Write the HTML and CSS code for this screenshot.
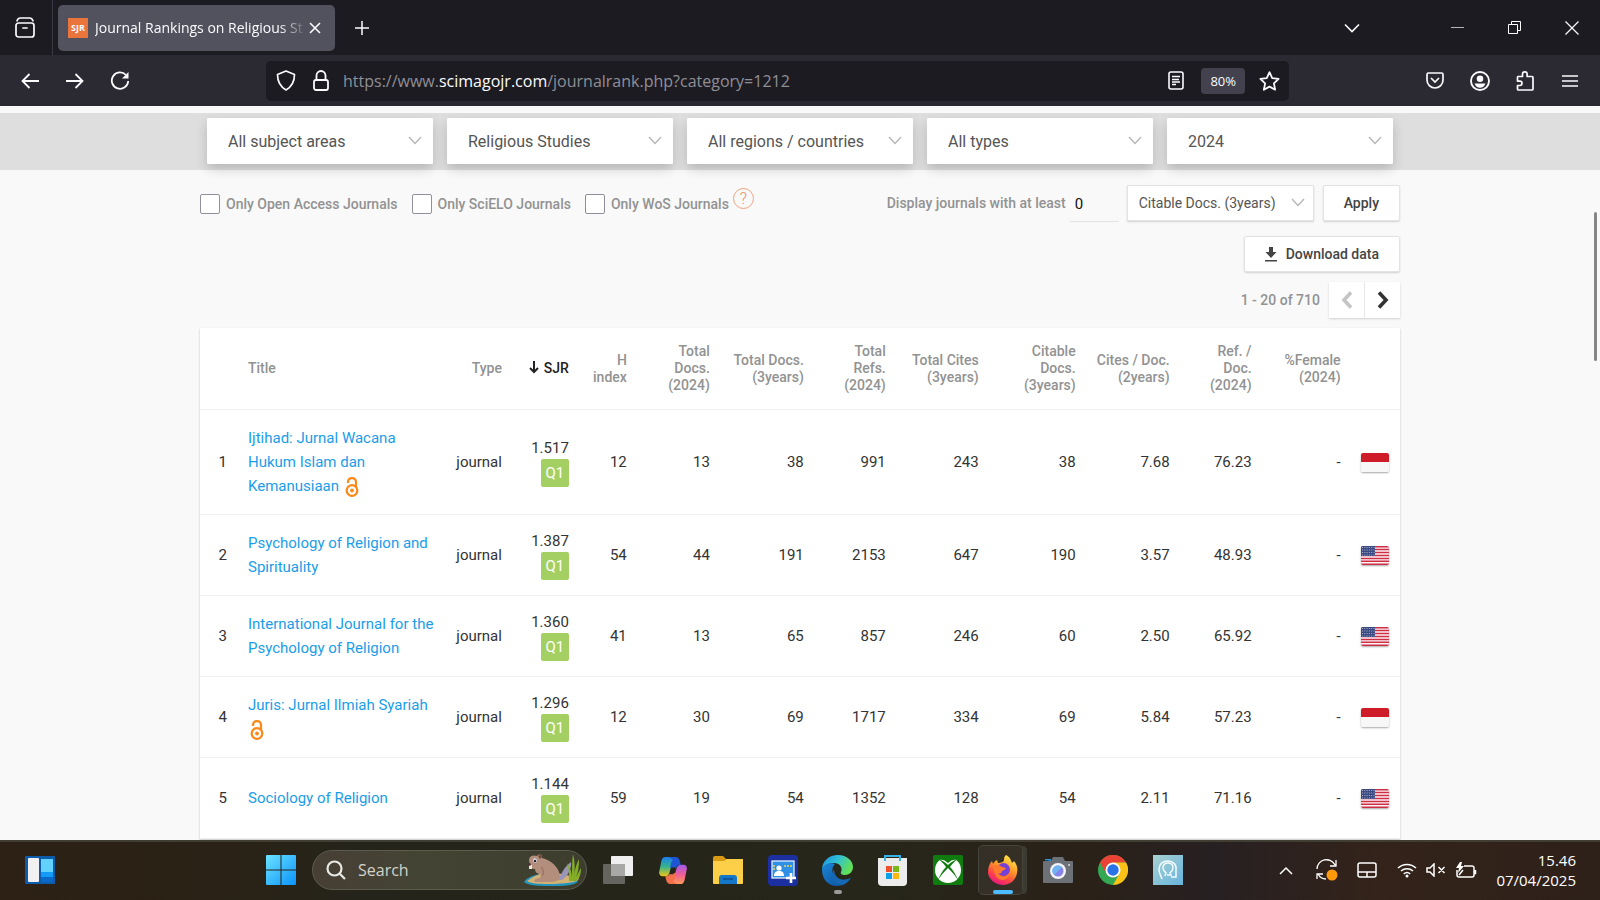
FILE: index.html
```html
<!DOCTYPE html>
<html lang="en">
<head>
    <meta charset="UTF-8">
    <meta name="viewport" content="width=device-width, initial-scale=1.0">
    <title>Journal Rankings on Religious Studies</title>
    <link rel="stylesheet" href="styles.css">
</head>
<body>
    <!-- Shared symbols -->
    <svg class="symbols" aria-hidden="true">
        <symbol id="chevron" viewBox="0 0 14 9"><path d="M1 1l6 6.500 6-6.500" fill="none" stroke="currentColor" stroke-width="1.300"/></symbol>
        <symbol id="open-access" viewBox="0 0 14 20">
            <g fill="none" stroke="#f98a1c" stroke-width="2.300"><circle cx="7" cy="13.500" r="5.300"/><path d="M3 6V5a4 4 0 0 1 8 0v5.500"/></g>
            <circle cx="7" cy="13.500" r="1.900" fill="#f98a1c"/>
        </symbol>
        <symbol id="flag-id" viewBox="0 0 28 19"><rect width="28" height="19" fill="#f7f7f7"/><rect width="28" height="9" fill="#ce1c28"/></symbol>
        <symbol id="flag-us" viewBox="0 0 28 19">
            <rect width="28" height="19" fill="#fbf3f4"/>
            <path d="M0 .700h28M0 3.600h28M0 6.500h28M0 9.500h28M0 12.400h28M0 15.300h28M0 18.300h28" stroke="#cf2f44" stroke-width="1.500"/>
            <rect width="14" height="10" fill="#3b4a80"/>
            <path d="M1 1.500h13M1 4h13M1 6.500h13M1 9h13" stroke="#a8b0cc" stroke-width="1" stroke-dasharray="1 1.300"/>
        </symbol>
    </svg>

    <header class="browser">
        <div class="tab-bar">
            <button class="tab-view" aria-label="Recent browsing">
                <svg width="20" height="21" viewBox="0 0 20 21" fill="none" stroke="currentColor" stroke-width="1.700" stroke-linecap="round"><rect x="1" y="6" width="18" height="14" rx="2.500"/><path d="M2 3.800Q3 1 5.500 1h9Q17 1 18 3.800M8 11h4"/></svg>
            </button>
            <div class="tab">
                <span class="favicon">SJR</span>
                <span class="tab-title">Journal Rankings on Religious St</span>
                <button class="tab-close" aria-label="Close tab">
                    <svg width="12" height="12" viewBox="0 0 12 12" stroke="currentColor" stroke-width="1.600"><path d="M1 1l10 10M11 1L1 11"/></svg>
                </button>
            </div>
            <button class="tool" aria-label="New tab">
                <svg width="16" height="16" viewBox="0 0 16 16" stroke="currentColor" stroke-width="1.500"><path d="M8 1v14M1 8h14"/></svg>
            </button>
            <div class="window-controls">
                <button class="tool all-tabs" aria-label="List all tabs">
                    <svg width="16" height="10" viewBox="0 0 16 10" fill="none" stroke="currentColor" stroke-width="1.600"><path d="M1 1.500l7 7 7-7"/></svg>
                </button>
                <button class="window-button" aria-label="Minimize"><svg width="13" height="13" viewBox="0 0 13 13" stroke="#b5b5b8"><path d="M0 6.500h13" stroke-width="1"/></svg></button>
                <button class="window-button" aria-label="Restore"><svg width="13" height="13" viewBox="0 0 13 13" fill="none" stroke="currentColor" stroke-width="1"><path d="M.500 3.500h9v9h-9zM3.500 3V.500h9v9H10"/></svg></button>
                <button class="window-button" aria-label="Close"><svg width="14" height="14" viewBox="0 0 14 14" stroke="currentColor" stroke-width="1.200"><path d="M.500.500l13 13M13.500.500l-13 13"/></svg></button>
            </div>
        </div>

        <div class="nav-bar">
            <button class="tool" aria-label="Back"><svg width="18" height="16" viewBox="0 0 18 16" fill="none" stroke="currentColor" stroke-width="1.800"><path d="M8.500 1l-7 7 7 7M1.500 8H18"/></svg></button>
            <button class="tool" aria-label="Forward"><svg width="18" height="16" viewBox="0 0 18 16" fill="none" stroke="currentColor" stroke-width="1.800"><path d="M9.500 1l7 7-7 7M16.500 8H0"/></svg></button>
            <button class="tool" aria-label="Reload"><svg width="20" height="20" viewBox="0 0 20 20" fill="none" stroke="currentColor" stroke-width="1.800"><path d="M16 4A8.200 8.200 0 1 0 18.200 10"/><path d="M18.500 1v6.500H12z" fill="currentColor" stroke="none"/></svg></button>
            <div class="url-bar">
                <svg width="20" height="21" viewBox="0 0 20 21" fill="none" stroke="currentColor" stroke-width="1.700" stroke-linejoin="round"><path d="M10 1l8.500 3.500c0 7-2.500 12-8.500 15.500C4 16.500 1.500 11.500 1.500 4.500z"/></svg>
                <svg width="16" height="21" viewBox="0 0 16 21" fill="none" stroke="currentColor" stroke-width="1.800"><rect x="1" y="10" width="14" height="10" rx="2"/><path d="M3.500 10V5.500a4.500 4.500 0 0 1 9 0V10"/></svg>
                <div class="url" role="textbox" aria-label="Address">https://www.<b>scimagojr.com</b>/journalrank.php?category=1212</div>
                <svg width="16" height="19" viewBox="0 0 16 19" fill="none" stroke="currentColor" stroke-width="1.600"><rect x="1" y="1" width="14" height="17" rx="2"/><path d="M4 5.500h8M4 8.500h7M4 11h8M4 13.500h4"/></svg>
                <button class="zoom-level">80%</button>
                <svg width="21" height="20" viewBox="0 0 21 20" fill="none" stroke="currentColor" stroke-width="1.800" stroke-linejoin="round"><path d="M10.500 1.200l2.700 5.900 6.400.800-4.700 4.400 1.200 6.400-5.600-3.100-5.600 3.100 1.200-6.400L1.400 7.900l6.400-.800z"/></svg>
            </div>
            <button class="tool" aria-label="Pocket"><svg width="18" height="17" viewBox="0 0 18 17" fill="none" stroke="currentColor" stroke-width="1.700"><path d="M2.500 1h13A1.500 1.500 0 0 1 17 2.500V8a8 8 0 0 1-16 0V2.500A1.500 1.500 0 0 1 2.500 1zM5 6l4 4 4-4"/></svg></button>
            <button class="tool" aria-label="Account"><svg width="20" height="20" viewBox="0 0 20 20"><circle cx="10" cy="10" r="9" fill="none" stroke="currentColor" stroke-width="1.900"/><circle cx="10" cy="7.800" r="3.300" fill="currentColor"/><path d="M4.500 12.500h11c-.8 2.800-3 4.200-5.500 4.200s-4.700-1.400-5.500-4.200z" fill="currentColor"/></svg></button>
            <button class="tool" aria-label="Extensions"><svg width="18" height="20" viewBox="0 0 18 20" fill="none" stroke="currentColor" stroke-width="1.700" stroke-linejoin="round"><path d="M2 5.500h4.500V3.200a2.300 2.300 0 0 1 4.600 0v2.300H16a1 1 0 0 1 1 1V18a1 1 0 0 1-1 1H2.500a1 1 0 0 1-1-1v-3.500h2.300a2.200 2.200 0 0 0 0-4.400H1.500V6z"/></svg></button>
            <button class="tool" aria-label="Menu"><svg width="16" height="14" viewBox="0 0 16 14" stroke="currentColor" stroke-width="1.600"><path d="M0 2h16M0 7h16M0 12h16"/></svg></button>
        </div>
    </header>

    <main class="page">
        <div class="filter-band">
            <div class="filters">
                <div class="dropdown"><select aria-label="Subject area"><option>All subject areas</option></select><svg><use href="#chevron"/></svg></div>
                <div class="dropdown"><select aria-label="Category"><option>Religious Studies</option></select><svg><use href="#chevron"/></svg></div>
                <div class="dropdown"><select aria-label="Region or country"><option>All regions / countries</option></select><svg><use href="#chevron"/></svg></div>
                <div class="dropdown"><select aria-label="Type"><option>All types</option></select><svg><use href="#chevron"/></svg></div>
                <div class="dropdown"><select aria-label="Year"><option>2024</option></select><svg><use href="#chevron"/></svg></div>
            </div>
        </div>

        <div class="content">
            <div class="options">
                <label class="check"><input type="checkbox">Only Open Access Journals</label>
                <label class="check"><input type="checkbox">Only SciELO Journals</label>
                <label class="check"><input type="checkbox">Only WoS Journals</label>
                <a href="#" class="help" aria-label="Help">?</a>
                <div class="minimum">
                    <label for="min-docs">Display journals with at least</label>
                    <input id="min-docs" type="text" value="0">
                    <div class="dropdown small"><select aria-label="Indicator"><option>Citable Docs. (3years)</option></select><svg><use href="#chevron"/></svg></div>
                    <button class="btn">Apply</button>
                </div>
            </div>

            <div class="actions">
                <button class="btn download">
                    <svg width="12" height="16" viewBox="0 0 12 16" fill="currentColor"><path d="M4 1h4v5h3.500L6 12 .500 6H4zM0 14h12v1.500H0z"/></svg>
                    Download data
                </button>
            </div>

            <div class="pagination">
                <span>1 - 20 of 710</span>
                <div class="pager">
                    <button disabled aria-label="Previous page"><svg width="12" height="18" viewBox="0 0 12 18" fill="none" stroke="currentColor" stroke-width="3.600"><path d="M10 1.500L3 9l7 7.500"/></svg></button>
                    <button aria-label="Next page"><svg width="12" height="18" viewBox="0 0 12 18" fill="none" stroke="currentColor" stroke-width="3.600"><path d="M2 1.500L9 9l-7 7.500"/></svg></button>
                </div>
            </div>

            <table class="rankings">
                <colgroup>
                    <col class="c-rank"><col class="c-title"><col class="c-type"><col class="c-sjr"><col class="c-h"><col class="c-docs"><col class="c-docs3">
                    <col class="c-refs"><col class="c-cites"><col class="c-citable"><col class="c-cpd"><col class="c-rpd"><col class="c-female"><col class="c-flag">
                </colgroup>
                <thead>
                    <tr>
                        <th></th>
                        <th class="title">Title</th>
                        <th>Type</th>
                        <th class="sorted"><svg width="10" height="13" viewBox="0 0 10 13" fill="none" stroke="currentColor" stroke-width="2"><path d="M5 0v11M1 7l4 4 4-4"/></svg>SJR</th>
                        <th>H<br>index</th>
                        <th>Total<br>Docs.<br>(2024)</th>
                        <th>Total Docs.<br>(3years)</th>
                        <th>Total<br>Refs.<br>(2024)</th>
                        <th>Total Cites<br>(3years)</th>
                        <th>Citable<br>Docs.<br>(3years)</th>
                        <th>Cites / Doc.<br>(2years)</th>
                        <th>Ref. /<br>Doc.<br>(2024)</th>
                        <th>%Female<br>(2024)</th>
                        <th></th>
                    </tr>
                </thead>
                <tbody>
                    <tr>
                        <td>1</td>
                        <td class="title"><a href="#">Ijtihad: Jurnal Wacana Hukum Islam dan Kemanusiaan</a> <svg class="oa"><use href="#open-access"/></svg></td>
                        <td>journal</td>
                        <td class="sjr">1.517<span class="q1">Q1</span></td>
                        <td>12</td><td>13</td><td>38</td><td>991</td><td>243</td><td>38</td><td>7.68</td><td>76.23</td><td>-</td>
                        <td class="country"><svg class="flag"><use href="#flag-id"/></svg></td>
                    </tr>
                    <tr>
                        <td>2</td>
                        <td class="title"><a href="#">Psychology of Religion and Spirituality</a></td>
                        <td>journal</td>
                        <td class="sjr">1.387<span class="q1">Q1</span></td>
                        <td>54</td><td>44</td><td>191</td><td>2153</td><td>647</td><td>190</td><td>3.57</td><td>48.93</td><td>-</td>
                        <td class="country"><svg class="flag"><use href="#flag-us"/></svg></td>
                    </tr>
                    <tr>
                        <td>3</td>
                        <td class="title"><a href="#">International Journal for the Psychology of Religion</a></td>
                        <td>journal</td>
                        <td class="sjr">1.360<span class="q1">Q1</span></td>
                        <td>41</td><td>13</td><td>65</td><td>857</td><td>246</td><td>60</td><td>2.50</td><td>65.92</td><td>-</td>
                        <td class="country"><svg class="flag"><use href="#flag-us"/></svg></td>
                    </tr>
                    <tr>
                        <td>4</td>
                        <td class="title"><a href="#">Juris: Jurnal Ilmiah Syariah</a> <svg class="oa"><use href="#open-access"/></svg></td>
                        <td>journal</td>
                        <td class="sjr">1.296<span class="q1">Q1</span></td>
                        <td>12</td><td>30</td><td>69</td><td>1717</td><td>334</td><td>69</td><td>5.84</td><td>57.23</td><td>-</td>
                        <td class="country"><svg class="flag"><use href="#flag-id"/></svg></td>
                    </tr>
                    <tr>
                        <td>5</td>
                        <td class="title"><a href="#">Sociology of Religion</a></td>
                        <td>journal</td>
                        <td class="sjr">1.144<span class="q1">Q1</span></td>
                        <td>59</td><td>19</td><td>54</td><td>1352</td><td>128</td><td>54</td><td>2.11</td><td>71.16</td><td>-</td>
                        <td class="country"><svg class="flag"><use href="#flag-us"/></svg></td>
                    </tr>
                </tbody>
            </table>
        </div>
        <div class="scroll-thumb"></div>
    </main>

    <footer class="taskbar">
        <button class="app widgets" aria-label="Widgets">
            <svg width="30" height="30" viewBox="0 0 30 28"><rect width="30" height="28" rx="1" fill="#0d5cab"/><rect x="3" y="2" width="11" height="24" rx="1" fill="#f1f1f1"/><rect x="16" y="3" width="12" height="13" fill="#62d1fb"/><rect x="16" y="16" width="12" height="5" fill="#139bf5"/><rect x="16" y="21" width="12" height="5" fill="#0a68c8"/></svg>
        </button>
        <button class="app" aria-label="Start">
            <svg width="30" height="30" viewBox="0 0 30 30"><defs><linearGradient id="win" x1="0" y1="0" x2="1" y2="1"><stop offset="0" stop-color="#6be3ff"/><stop offset="1" stop-color="#0b93fb"/></linearGradient></defs><path d="M1 0h13.500v14.500H0V1a1 1 0 0 1 1-1zM15.500 0H29a1 1 0 0 1 1 1v13.500H15.500zM0 15.500h14.500V30H1a1 1 0 0 1-1-1zM15.500 15.500H30V29a1 1 0 0 1-1 1H15.500z" fill="url(#win)"/></svg>
        </button>
        <div class="search">
            <svg width="20" height="20" viewBox="0 0 20 20" fill="none" stroke="#e8e8e4" stroke-width="2.200"><circle cx="8.500" cy="8.500" r="7"/><path d="M13.500 13.500l5.500 5.500"/></svg>
            <input type="search" aria-label="Search" placeholder="Search">
            <svg width="60" height="34" viewBox="0 0 60 34">
                <path d="M1 29c4-6 14-9 28-8l26 6c0 4-8 6-24 6-14 0-26 0-30-4z" fill="#2495bd"/>
                <path d="M4 28C12 21 24 18 34 20l22 5c0 4-10 5-24 6-14 0-24 0-28-3z" fill="#d3b274"/>
                <path d="M35 27c3-6 7-14 13-18 1 6-3 14-9 18z" fill="#9a95b8"/>
                <path d="M7 11C4 4 9 1 14 3c2-3 6-1 5 2 9 2 17 9 18 18 0 6-7 6-13 6H13c-3 0-2-4 4-4l1-4c-4 0-6-2-6-5-3 0-6-1-5-5z" fill="#b48e7c"/>
                <path d="M18 14c3 3 3 6 1 9" fill="none" stroke="#8e6a5b" stroke-width="1"/>
                <path d="M15 3c1-2 4-1 4 1l-2 2z" fill="#6d4639"/>
                <ellipse cx="12" cy="7.500" rx="1.800" ry="2.200" fill="#dce4f5"/><circle cx="12" cy="8" r="1.200" fill="#24212f"/><path d="M6 12h3v4H6z" fill="#efe6df"/><ellipse cx="6.500" cy="11.500" rx="1.500" ry="1.300" fill="#52323a"/>
                <path d="M46 28c0-8 0-12-2-18 4 6 5 10 5 15 0-10 0-18 1-24 2 8 2 15 1 23 1-8 2-12 5-18 0 8-1 14-3 18 2-3 3-6 5-9 0 7-2 11-5 13z" fill="#83ae25"/>
            </svg>
        </div>
        <button class="app" aria-label="Task view">
            <svg width="30" height="28" viewBox="0 0 30 28"><rect x="8" width="22" height="20" rx="1" fill="#efefef"/><rect y="8" width="22" height="20" rx="1" fill="#66645f"/><rect x="8" y="8" width="14" height="12" fill="#a8a8a6"/></svg>
        </button>
        <button class="app" aria-label="Copilot">
            <svg width="28" height="27" viewBox="0 0 28 28">
                <defs>
                    <linearGradient id="cp1" x1="0" y1="0" x2="0" y2="1"><stop offset="0" stop-color="#1c7ff2"/><stop offset=".5" stop-color="#35b58c"/><stop offset="1" stop-color="#f2c417"/></linearGradient>
                    <linearGradient id="cp2" x1="0" y1="0" x2="0" y2="1"><stop offset="0" stop-color="#a25af0"/><stop offset=".5" stop-color="#ee5d97"/><stop offset="1" stop-color="#ff9a54"/></linearGradient>
                </defs>
                <path d="M6 0h11l-3 4-4 13c-1 2-2 3-4 3H3c-3 0-4-3-3-6L2 4c1-3 2-4 4-4z" fill="url(#cp1)"/>
                <path d="M22 28H11l3-4 4-13c1-2 2-3 4-3h3c3 0 4 3 3 6l-2 10c-1 3-2 4-4 4z" fill="url(#cp2)"/>
                <path d="M8 0h9c3 0 4 3 5 8-3 0-4 1-5 4h-3l-3-1c1-4 1-7 3-7-1-2-3-4-6-4z" fill="#1c56d4"/>
                <path d="M20 28h-9c-3 0-4-3-5-8 3 0 4-1 5-4h3l3 1c-1 4-1 7-3 7 1 2 3 4 6 4z" fill="#f2704a"/>
                <path d="M12.500 11h4l-2 7h-4z" fill="#27261a"/>
            </svg>
        </button>
        <button class="app" aria-label="File Explorer">
            <svg width="30" height="30" viewBox="0 0 30 28"><path d="M0 2a2 2 0 0 1 2-2h8l3 3h17v6H0z" fill="#d99a13"/><path d="M0 5h11l3-2h16v24a1 1 0 0 1-1 1H1a1 1 0 0 1-1-1z" fill="#fdcf48"/><path d="M6 28v-6a3 3 0 0 1 3-3h12a3 3 0 0 1 3 3v6z" fill="#1477c9"/><path d="M10 23h10" stroke="#0a4c8c" stroke-width="1.500"/></svg>
        </button>
        <button class="app" aria-label="Learning app">
            <svg width="30" height="31" viewBox="0 0 30 31"><rect width="30" height="31" rx="4" fill="#1b2fa0"/><rect x="4" y="6" width="22" height="17" fill="#2f8fe4" stroke="#dff0ff" stroke-width="1.300"/><circle cx="11" cy="13" r="2.600" fill="#fff"/><path d="M6 21c0-4 2-5 5-5s5 1 5 5z" fill="#fff"/><path d="M16 11h8M6 10v6" stroke="#e9dc5b" stroke-width="1.500" stroke-dasharray="2 1"/><path d="M23 18v10M18 23h10" stroke="#fff" stroke-width="2.600"/></svg>
        </button>
        <button class="app running" aria-label="Edge">
            <svg width="31" height="31" viewBox="0 0 31 31">
                <defs>
                    <linearGradient id="ed1" x1="0" y1="0" x2="1" y2=".4"><stop offset="0" stop-color="#1a8fe0"/><stop offset=".5" stop-color="#2fbfd8"/><stop offset="1" stop-color="#62df58"/></linearGradient>
                    <linearGradient id="ed2" x1="0" y1="0" x2="1" y2="1"><stop offset="0" stop-color="#1b86d8"/><stop offset="1" stop-color="#0c4b94"/></linearGradient>
                </defs>
                <path d="M0 15C0 6 7 0 16 0c9 0 15 6 15 12 0 5-4 8-8 8-3 0-5-1-4-3 2-4-1-9-7-9-6 0-11 3-12 7z" fill="url(#ed1)"/>
                <path d="M0 15C1 9 8 7 13 9c-3 3-3 7-2 10 2 6 9 8 17 4-3 6-8 8-13 8C6 31 0 24 0 15z" fill="url(#ed2)"/>
                <path d="M12 14c-4 7 0 15 8 16 4-1 7-4 9-7-8 4-17 1-17-9z" fill="#1667b4"/>
            </svg>
        </button>
        <button class="app" aria-label="Microsoft Store">
            <svg width="29" height="32" viewBox="0 0 29 32"><path d="M7 7V2h15v5" fill="none" stroke="#35b2ea" stroke-width="2"/><path d="M0 4h29v24a4 4 0 0 1-4 4H4a4 4 0 0 1-4-4z" fill="#ececec"/><path d="M7 7V1M22 7V1" stroke="#35b2ea" stroke-width="2"/><path d="M8 12h6v6H8z" fill="#f0502a"/><path d="M15 12h6v6h-6z" fill="#7cb813"/><path d="M8 19h6v6H8z" fill="#10a0e8"/><path d="M15 19h6v6h-6z" fill="#fab90f"/></svg>
        </button>
        <button class="app" aria-label="Xbox">
            <svg width="30" height="30" viewBox="0 0 30 30"><rect width="30" height="30" rx="2" fill="#107c10"/><circle cx="15" cy="15" r="13" fill="#fff"/><path d="M6 5c3-1 6 0 9 3 3-3 6-4 9-3l-2-3H8z" fill="#107c10"/><path d="M6 5c3 0 6 2 9 5 3-3 6-5 9-5-2 1-5 4-7 7 3 3 6 8 8 13-3-5-7-9-10-12-3 3-7 7-10 12 2-5 5-10 8-13C11 9 8 6 6 5z" fill="#107c10"/></svg>
        </button>
        <button class="app active" aria-label="Firefox">
            <svg width="30" height="30" viewBox="0 0 30 30">
                <defs><linearGradient id="ff" x1=".8" y1="0" x2=".3" y2="1"><stop offset="0" stop-color="#fff04a"/><stop offset=".45" stop-color="#ff9328"/><stop offset=".75" stop-color="#ff3f4c"/><stop offset="1" stop-color="#e31587"/></linearGradient></defs>
                <path d="M18 0c4 2 5 5 6 8l2-2c3 4 4 7 3 12-1 7-7 12-14 12S1 25 0 18C0 13 1 9 4 6l1 3c1-2 2-3 4-4l1 3c3 0 6-1 6-3 0-2 0-3 2-5z" fill="url(#ff)"/>
                <circle cx="15.500" cy="14.500" r="6.500" fill="#7440d8"/>
                <path d="M6 11c3-2 6-1 8 1l4 1c-1 2-3 2-4 3 0 2-2 3-4 2 2 4 8 5 12 0-1 6-5 7-8 7-6-1-9-7-8-14z" fill="#ff7a2a"/>
            </svg>
        </button>
        <button class="app" aria-label="Camera">
            <svg width="30" height="28" viewBox="0 0 30 26"><path d="M2 3V2h6v2z" fill="#2296e3"/><path d="M0 5a1 1 0 0 1 1-1h7l2-4h10l2 4h7a1 1 0 0 1 1 1v20a1 1 0 0 1-1 1H1a1 1 0 0 1-1-1z" fill="#6c7178"/><circle cx="15" cy="14" r="8" fill="#f4f4f6"/><circle cx="15" cy="14" r="5.500" fill="#8684ea"/><path d="M11 18a5.500 5.500 0 0 1 8-8z" fill="#6eb5f2"/><circle cx="26" cy="8" r="1" fill="#d8dadf"/></svg>
        </button>
        <button class="app" aria-label="Chrome">
            <svg width="30" height="30" viewBox="0 0 30 30"><circle cx="15" cy="15" r="15" fill="#34a853"/><path d="M2 7.500A15 15 0 0 1 28 7.500L15 8l-6.500 11z" fill="#ea4335"/><path d="M28 7.500A15 15 0 0 1 15 30l6.500-11.500L15 7.500z" fill="#fbc116"/><circle cx="15" cy="15" r="7.500" fill="#fff"/><circle cx="15" cy="15" r="5.700" fill="#2a72e8"/></svg>
        </button>
        <button class="app" aria-label="Assistant">
            <svg width="30" height="30" viewBox="0 0 30 30"><defs><linearGradient id="as" x1="0" y1="0" x2="1" y2="1"><stop offset="0" stop-color="#a8d2d2"/><stop offset="1" stop-color="#68b4dd"/></linearGradient></defs><rect width="30" height="30" fill="url(#as)"/><g fill="none" stroke="#f4fbff" stroke-width="1.500"><path d="M9 24l-2-5c-1-2-1-3-1-5 0-5 4-8 9-8s9 4 8 9v7h-5"/><path d="M12 21l1-3c-2-2-3-3-3-5 0-3 2-5 5-5s5 2 5 5c0 2-1 3-3 5l1 2h-4"/></g></svg>
        </button>
        <div class="tray">
            <svg class="up" width="14" height="9" viewBox="0 0 14 9"><path d="M1 8l6-6 6 6"/></svg>
            <svg class="sync" width="22" height="22" viewBox="0 0 22 22"><path d="M1 10A9.500 9.500 0 0 1 19 6M20 1v6h-6M1 20v-5h6M2 15a9.500 9.500 0 0 0 8 5" stroke-width="1.300"/><circle cx="16" cy="16" r="5.500" fill="#ff9a0a" stroke="none"/></svg>
            <svg class="touchpad" width="20" height="16" viewBox="0 0 20 16"><rect x="1" y="1" width="18" height="14" rx="2"/><path d="M1 10h18M10 10v5"/></svg>
            <svg class="wifi" width="20" height="16" viewBox="0 0 20 16"><path d="M1 6a13 13 0 0 1 18 0M4 9a9 9 0 0 1 12 0M6.800 11.800a5 5 0 0 1 6.400 0"/><circle cx="10" cy="14" r="1.500" fill="#fff" stroke="none"/></svg>
            <svg class="volume" width="20" height="14" viewBox="0 0 20 14"><path d="M1 5h3l4-4v12L4 9H1zM12.500 4l6 6M18.500 4l-6 6"/></svg>
            <svg class="battery" width="21" height="17" viewBox="0 0 21 17"><path d="M8 4h8a2 2 0 0 1 2 2v7a2 2 0 0 1-2 2H3a2 2 0 0 1-2-2V8M18.500 8v3.500h1V8M3 13l4-5"/><path d="M4 0h2L5 4h3L2 11l1-5H0z" fill="#fff" stroke="none"/></svg>
            <div class="clock"><span>15.46</span><span>07/04/2025</span></div>
        </div>
    </footer>
</body>
</html>
```

FILE: styles.css
```css
:root {
    --link: #1a9dea;
    --text: #333333;
    --muted: #929292;
    --green: #a4cf63;
    --page-bg: #f9f9f9;
    --ui-font: "Open Sans", "Noto Sans", sans-serif;
}

* {
    box-sizing: border-box;
}

body {
    margin: 0;
    height: 100vh;
    display: flex;
    flex-direction: column;
    overflow: hidden;
    background: var(--page-bg);
    color: var(--text);
    font-family: Roboto, sans-serif;
    font-size: 15px;
}

button {
    border: 0;
    padding: 0;
    background: none;
    color: inherit;
    font: inherit;
    cursor: pointer;
}

.symbols {
    display: none;
}

/* Browser chrome */
.browser {
    flex: none;
    color: #fbfbfe;
    font-family: var(--ui-font);
}

.tab-bar {
    display: flex;
    align-items: center;
    height: 55px;
    background: #1c1b22;
}

.tab-view {
    display: flex;
    align-items: center;
    justify-content: center;
    width: 53px;
    height: 55px;
    border-right: 1px solid #3a3944;
    padding-right: 2px;
}

.tab {
    display: flex;
    align-items: center;
    width: 277px;
    height: 46px;
    margin-left: 5px;
    margin-right: 4px;
    padding: 0 12px 0 10px;
    border-radius: 5px;
    background: #52525e;
}

.favicon {
    width: 20px;
    height: 20px;
    margin-right: 7px;
    background: #e9743c;
    font-size: 9px;
    font-weight: 700;
    line-height: 20px;
    text-align: center;
}

.tab-title {
    flex: 1;
    font-size: 14px;
    white-space: nowrap;
    mask-image: linear-gradient(to right, #000 calc(100% - 28px), transparent);
}

.tab-close {
    display: flex;
    padding: 2px;
}

.tool {
    display: flex;
    align-items: center;
    justify-content: center;
    flex: none;
    width: 45px;
    height: 40px;
}

.window-controls {
    display: flex;
    align-items: center;
    margin-left: auto;
}

.all-tabs {
    margin-right: 55px;
}

.window-button {
    display: flex;
    align-items: center;
    justify-content: center;
    width: 57px;
    height: 40px;
}

.nav-bar {
    display: flex;
    align-items: center;
    height: 51px;
    padding: 0 8px 0 7px;
    background: #2b2a33;
}

.url-bar {
    display: flex;
    align-items: center;
    flex: 1;
    height: 40px;
    margin: 0 123px 0 124px;
    padding: 0 9px 0 10px;
    border-radius: 5px;
    background: #1c1b22;
}

.url {
    flex: 1;
    margin-left: 14px;
    color: #8f8f96;
    font-size: 16px;
    white-space: nowrap;
}

.url b {
    color: #fbfbfe;
    font-weight: 400;
}

.url-bar svg:nth-of-type(2) {
    margin-left: 17px;
}

.zoom-level {
    height: 26px;
    margin: 0 14px 0 17px;
    padding: 0 9px;
    border-radius: 4px;
    background: #42414d;
    font-size: 13px;
}

/* Page */
.page {
    position: relative;
    flex: 1;
    min-height: 0;
    overflow: hidden;
    padding-top: 7px;
}

.scroll-thumb {
    position: absolute;
    top: 106px;
    right: 3px;
    width: 3px;
    height: 149px;
    border-radius: 2px;
    background: #868686;
}

.filter-band {
    height: 57px;
    padding-top: 5px;
    background: #dedede;
}

.filters {
    display: grid;
    grid-template-columns: repeat(5, 1fr);
    gap: 14px;
    max-width: 1200px;
    margin: 0 auto;
    padding: 0 7px;
}

.dropdown {
    position: relative;
}

.dropdown select {
    width: 100%;
    height: 46px;
    padding: 0 36px 0 21px;
    border: 0;
    border-radius: 1px;
    background: #fff;
    box-shadow: 0 5px 12px rgba(0, 0, 0, 0.18);
    color: #555;
    font: 16px Roboto, sans-serif;
    appearance: none;
}

.dropdown svg {
    position: absolute;
    top: 50%;
    right: 11px;
    width: 14px;
    height: 9px;
    margin-top: -5px;
    color: #b5b5b5;
    pointer-events: none;
}

.content {
    max-width: 1200px;
    margin: 0 auto;
    padding-top: 15px;
}

.options {
    display: flex;
    align-items: center;
    height: 36px;
    color: var(--muted);
    font-size: 14px;
    font-weight: 500;
}

.check {
    display: flex;
    align-items: center;
    gap: 6px;
    margin-right: 14px;
    padding-top: 1px;
}

.check input {
    width: 20px;
    height: 20px;
    margin: 0;
    border: 1px solid #8f8f9d;
    border-radius: 2px;
    background: #fff;
    appearance: none;
}

.help {
    width: 21px;
    height: 21px;
    margin: 0 0 10px -10px;
    border: 1px solid #f2a27e;
    border-radius: 50%;
    color: #f08a5d;
    font-size: 16px;
    font-weight: 300;
    line-height: 19px;
    text-align: center;
    text-decoration: none;
}

.minimum {
    display: flex;
    align-items: center;
    margin-left: auto;
}

.minimum > input {
    width: 49px;
    height: 36px;
    margin: 2px 8px 0 4px;
    padding: 0 5px;
    border: 0;
    border-bottom: 1px solid #e3e3e3;
    background: none;
    color: #111;
    font: 15px Roboto, sans-serif;
}

.dropdown.small select {
    width: 187px;
    height: 36px;
    padding: 0 30px 0 11px;
    border: 1px solid #e3e3e3;
    box-shadow: 0 1px 2px rgba(0, 0, 0, 0.16);
    font-size: 14px;
}

.dropdown.small svg {
    right: 9px;
}

.btn {
    height: 36px;
    padding: 0 20px;
    border: 1px solid #e3e3e3;
    border-radius: 2px;
    background: #fff;
    box-shadow: 0 1px 2px rgba(0, 0, 0, 0.16);
    color: #444;
    font-size: 14px;
    font-weight: 500;
}

.minimum .btn {
    margin-left: 9px;
}

.actions {
    display: flex;
    justify-content: flex-end;
    margin-top: 15px;
}

.download {
    display: flex;
    align-items: center;
    gap: 9px;
}

.pagination {
    display: flex;
    align-items: center;
    justify-content: flex-end;
    gap: 9px;
    margin: 10px 0;
    color: var(--muted);
    font-size: 14px;
    font-weight: 500;
}

.pager {
    display: flex;
    background: #fff;
    box-shadow: 0 1px 2px rgba(0, 0, 0, 0.16);
}

.pager button {
    display: flex;
    align-items: center;
    justify-content: center;
    width: 35px;
    height: 36px;
    color: #333;
}

.pager button:disabled {
    width: 36px;
    border-right: 1px solid #e8e8e8;
    color: #c4c4c4;
}

/* Rankings table */
.rankings {
    width: 100%;
    table-layout: fixed;
    border-spacing: 0;
    background: #fff;
    box-shadow: 0 1px 2px rgba(0, 0, 0, 0.22);
    line-height: 24px;
    text-align: right;
}

.c-rank { width: 3.25%; }
.c-title { width: 17.33%; }
.c-type { width: 5.58%; }
.c-sjr { width: 5.58%; }
.c-h { width: 4.83%; }
.c-docs { width: 6.92%; }
.c-docs3 { width: 7.83%; }
.c-refs { width: 6.83%; }
.c-cites { width: 7.75%; }
.c-citable { width: 8.08%; }
.c-cpd { width: 7.83%; }
.c-rpd { width: 6.83%; }
.c-female { width: 7.42%; }
.c-flag { width: 3.94%; }

.rankings th,
.rankings td {
    padding: 16px 12px 16px 0;
    border-bottom: 1px solid #f0f0f0;
}

.rankings th {
    padding-top: 15px;
    padding-bottom: 15px;
    color: var(--muted);
    font-size: 14px;
    font-weight: 500;
    line-height: 17px;
    text-align: right;
    white-space: nowrap;
}

.rankings th.sorted {
    color: #222;
}

.sorted svg {
    margin-right: 5px;
    vertical-align: -1px;
}

.rankings .title {
    padding-left: 9px;
    text-align: left;
}

.rankings a {
    color: var(--link);
    text-decoration: none;
}

.rankings td.sjr {
    padding-top: 15px;
    padding-bottom: 15px;
    line-height: 22px;
}

.rankings td.country {
    padding-right: 11px;
}

.q1 {
    display: block;
    width: 28px;
    height: 28px;
    margin-left: auto;
    border-radius: 2px;
    background: var(--green);
    color: #fff;
    line-height: 28px;
    text-align: center;
}

.oa {
    width: 14px;
    height: 20px;
    margin: -2px 0 -2px 2px;
    vertical-align: middle;
}

.flag {
    display: block;
    width: 28px;
    height: 19px;
    margin-left: auto;
    border-radius: 2px;
    box-shadow: 0 1px 2px rgba(0, 0, 0, 0.35);
}

/* Taskbar */
.taskbar {
    position: relative;
    display: flex;
    align-items: center;
    flex: none;
    height: 60px;
    padding: 0 24px 2px 12px;
    border-top: 2px solid #403e33;
    background: linear-gradient(to right, #2c2114 0%, #2a2216 14%, #25241a 22%, #27261a 55%, #2a2118 68%, #272022 76%, #33231a 86%, #2e2119 100%);
    color: #fff;
    font-family: var(--ui-font);
}

.app {
    position: relative;
    display: flex;
    align-items: center;
    justify-content: center;
    flex: none;
    width: 55px;
    height: 50px;
}

.widgets {
    margin-right: 186px;
}

.search {
    display: flex;
    align-items: center;
    flex: none;
    width: 275px;
    height: 40px;
    margin: 0 3px 0 4px;
    padding: 0 3px 0 13px;
    border: 1px solid #5d5b4e;
    border-radius: 20px;
    background: linear-gradient(to right, #473f34, #434434 40%, #3d3d2e);
}

.search input {
    flex: 1;
    min-width: 0;
    margin-left: 12px;
    border: 0;
    padding: 0;
    background: none;
    color: #fff;
    font: 16px var(--ui-font);
}

.search input::placeholder {
    color: #d3d2cb;
}

.app.active::before {
    content: "";
    position: absolute;
    inset: 0 7px 0 3px;
    border: 1px solid #45453b;
    border-radius: 5px;
    background: rgba(255, 255, 255, 0.06);
    box-shadow: 5px 0 0 -1px #3c3a31;
}

.app.active svg {
    position: relative;
}

.app.running::after,
.app.active::after {
    content: "";
    position: absolute;
    bottom: 1px;
    width: 8px;
    height: 4px;
    border-radius: 2px;
    background: #9b9a96;
}

.app.active::after {
    width: 20px;
    background: #4cbcff;
}

.tray {
    display: flex;
    align-items: center;
    margin-left: auto;
}

.tray svg {
    fill: none;
    stroke: #fff;
    stroke-width: 1.5;
}

.tray .sync {
    margin-left: 23px;
}

.tray .touchpad {
    margin-left: 19px;
}

.tray .wifi {
    margin-left: 20px;
}

.tray .volume {
    margin-left: 9px;
}

.tray .battery {
    margin-left: 10px;
}

.clock {
    display: flex;
    flex-direction: column;
    align-items: flex-end;
    margin-left: 19px;
    font-size: 15px;
    line-height: 20px;
}
```
